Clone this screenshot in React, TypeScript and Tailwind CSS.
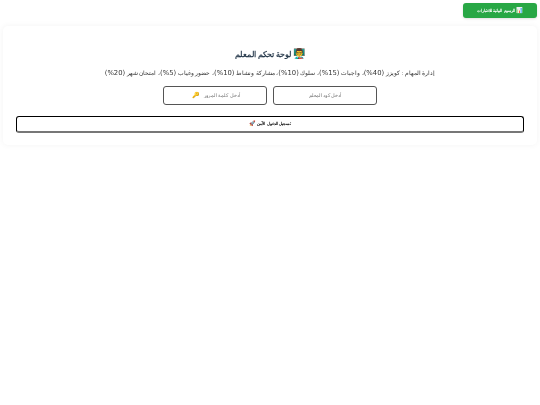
const font = "[font-family:'Liberation_Sans',sans-serif]";
const num = "[font-family:'DejaVu_Sans',sans-serif] text-[6.8px]";
const field = "block h-[19px] w-[104px] rounded-[3px] border border-[#555] text-center text-[4.9px] placeholder:text-[#757575]";

function Num({ children }: { children: string }) {
  return <span className={num}>{children}</span>;
}

export default function App() {
  return (
    <div dir="rtl" className={`min-h-[405px] bg-white px-[3px] pt-[3px] blur-[0.25px] ${font}`}>
      <div className="flex justify-start">
        <button className="h-[15px] w-[74px] rounded-[3px] bg-[#28a745] text-[4.45px] font-bold text-white shadow-sm">
          <span className="text-[5.5px]">📊</span> الرسوم البيانية للاختبارات
        </button>
      </div>
      <div className="mt-[8px] flex h-[119px] flex-col items-center rounded-[5px] bg-white px-[13px] pt-[22px] shadow-[0_0_6px_rgba(0,0,0,0.05)]">
        <h1 className="text-[7.75px] leading-[12px] font-bold text-[#2c3e50]">
          <span className="text-[10px]">👨‍🏫</span> لوحة تحكم المعلم
        </h1>
        <p className="mt-[6px] text-[5.85px] leading-[12px] text-[#333]">
          إدارة المهام : كويزز <Num>(40%)</Num>، واجبات <Num>(15%)</Num>، سلوك <Num>(10%)</Num>، مشاركة ونشاط <Num>(10%)</Num>، حضور وغياب <Num>(5%)</Num>، امتحان شهر <Num>(20%)</Num>
        </p>
        <div className="mt-[7px] flex items-start justify-center gap-[6px]">
          <input placeholder="أدخل كود المعلم" className={field} />
          <div className="relative">
            <input placeholder="أدخل كلمة المرور" className={`${field} pl-[14px]`} />
            <span className="absolute top-[5px] left-[29px] text-[6px] leading-[9px]">🔑</span>
          </div>
        </div>
        <button className="mt-[11px] h-[17px] w-full rounded-[3px] border border-black border-b-2 border-b-[#777] bg-white text-[4.4px] font-bold text-black">
          تسجيل الدخول الآمن <span className="text-[5.3px]">🚀</span>
        </button>
      </div>
    </div>
  );
}
